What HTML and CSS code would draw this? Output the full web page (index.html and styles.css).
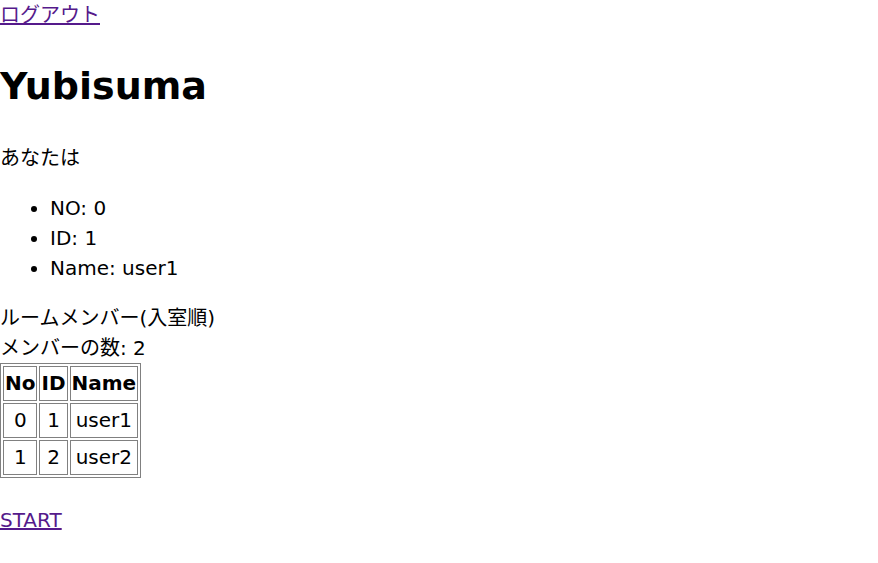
FILE: index.html
```html
<!DOCTYPE html>
<html lang="ja">
<head>
    <meta charset="UTF-8">
    <meta name="viewport" content="width=device-width, initial-scale=1.0">
    <title>Yubisuma</title>
    <link rel="stylesheet" href="styles.css">
</head>
<body>
    <a href="#" class="link">ログアウト</a>
    <h1>Yubisuma</h1>

    <p>あなたは</p>
    <ul>
        <li>NO: 0</li>
        <li>ID: 1</li>
        <li>Name: user1</li>
    </ul>

    <div>ルームメンバー(入室順)</div>
    <div>メンバーの数: 2</div>
    <table class="members">
        <tr>
            <th>No</th>
            <th>ID</th>
            <th>Name</th>
        </tr>
        <tr>
            <td>0</td>
            <td>1</td>
            <td>user1</td>
        </tr>
        <tr>
            <td>1</td>
            <td>2</td>
            <td>user2</td>
        </tr>
    </table>

    <p class="start"><a href="#" class="link">START</a></p>
</body>
</html>
```

FILE: styles.css
```css
body {
    font-family: "DejaVu Sans", "Noto Sans CJK JP", sans-serif;
    font-size: 20px;
    line-height: 1.5;
    margin: 0;
    color: #000;
    background: #fff;
}
.link {
    color: #551a8b;
}
h1 {
    font-size: 38px;
    line-height: 60px;
    margin: 26px 0 27px;
}
p {
    margin: 20px 0;
}
ul {
    margin: 20px 0;
    padding-left: 50px;
}
.members {
    border: 1px solid #808080;
    border-spacing: 2px;
    line-height: 31px;
}
.members th,
.members td {
    border: 1px solid #808080;
    padding: 1px;
    text-align: center;
}
.start {
    margin-top: 27px;
}
```
